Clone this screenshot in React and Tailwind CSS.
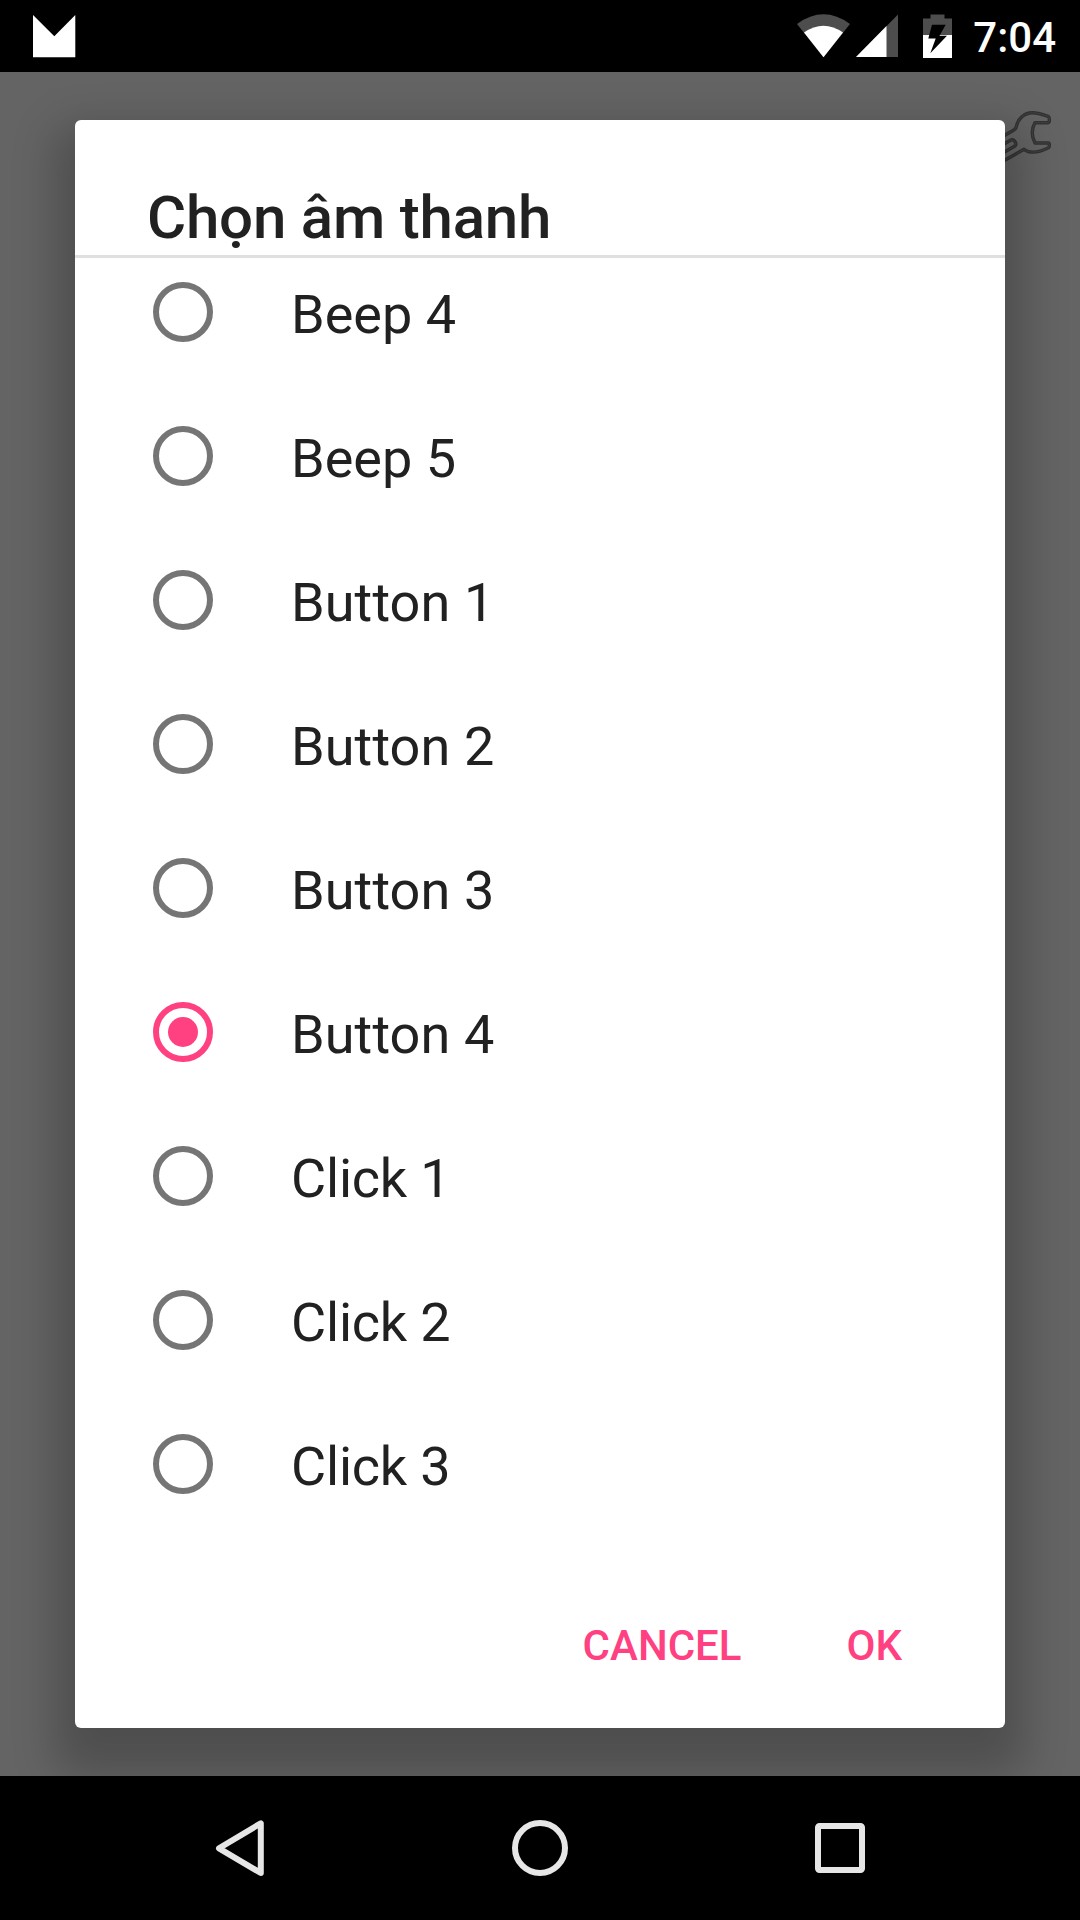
import React from "react";

const SOUNDS = [
  { name: "Beep 4", tracking: "tracking-normal" },
  { name: "Beep 5", tracking: "tracking-normal" },
  { name: "Button 1", tracking: "tracking-[0.1px]" },
  { name: "Button 2", tracking: "tracking-[0.1px]" },
  { name: "Button 3", tracking: "tracking-[0.1px]" },
  { name: "Button 4", tracking: "tracking-[0.1px]" },
  { name: "Click 1", tracking: "tracking-[-0.2px]" },
  { name: "Click 2", tracking: "tracking-[-0.2px]" },
  { name: "Click 3", tracking: "tracking-[-0.2px]" },
];
const SELECTED = "Button 4";

function StatusBar() {
  return (
    <header className="relative z-10 flex h-[72px] items-center justify-between bg-black pl-[33px] pr-[24px]">
      <svg width="43" height="43" viewBox="0 0 43 43" className="mt-[1px]">
        <path d="M0 0L21.3 21.3L42.3 0V42.3H0Z" fill="#fff" />
      </svg>
      <div className="flex items-center">
        <svg width="155" height="44" viewBox="797 14 155 44">
          <path d="M797 24Q823.5 4.700 850 24L823.500 57.300Z" fill="#4d4d4d" />
          <path d="M804 32.600Q823.500 19 843 32.600L823.500 57.300Z" fill="#fff" />
          <path d="M898 14.500V57H856Z" fill="#4d4d4d" />
          <path d="M886.500 26V57H856Z" fill="#fff" />
          <path d="M923 18.500H930.500V14.500H944.500V18.500H952V35H923Z" fill="#4d4d4d" />
          <path d="M923 35H952V58H923Z" fill="#fff" />
          <path d="M932 24.700H945.700L939.500 35.700H947L930.300 53.200L935.700 38.600H928.300Z" fill="#000" />
        </svg>
        <span className="ml-[21px] mt-[4px] text-[42px] font-medium leading-[50px] text-white">7:04</span>
      </div>
    </header>
  );
}

function WrenchIcon() {
  const d =
    "M1000 138L1013.500 130.200Q1016 129 1016.500 126C1018 119 1024 112.800 1032.500 112.800C1038 112.800 1044 115 1048 116.300Q1049.500 117 1049.300 119V121.500Q1049 122.700 1048 122.700H1035Q1029.500 132.500 1035 143H1048Q1049.300 143 1049.300 144.500V146.500Q1049.300 147.500 1048 148C1041 151.500 1034 153 1028 151.500Q1025.500 150.500 1024 149.300L1000 163M1000 146.300L1010.500 140.200Q1013.500 138.800 1015.500 142.500Q1016.500 145 1014.500 146.300L1000 154.600";
  return (
    <svg width="54" height="60" viewBox="1000 108 54 60" fill="none" strokeLinejoin="round">
      <path d={d} stroke="#323232" strokeWidth="3.400" />
      <path d={d} stroke="#424242" strokeWidth="1" />
    </svg>
  );
}

function Radio({ checked }) {
  return checked ? (
    <span className="flex size-[60px] items-center justify-center rounded-full border-[6px] border-[#ff4081]">
      <span className="size-[30px] rounded-full bg-[#ff4081]" />
    </span>
  ) : (
    <span className="size-[60px] rounded-full border-[6px] border-[#757575]" />
  );
}

function SoundDialog() {
  return (
    <section className="z-10 col-start-1 row-start-1 mx-[75px] my-[48px] flex flex-col rounded-[6px] bg-white shadow-[0_26px_44px_20px_rgba(0,0,0,0.22)]">
      <h1 className="h-[135px] pl-[72px] pt-[63px] text-[60px] font-medium leading-[70px] tracking-[-0.2px] text-[#212121]">Chọn âm thanh</h1>
      <div className="h-[3px] shrink-0 bg-[#e0e0e0]" />
      <ul className="-mt-[18px]">
        {SOUNDS.map(({ name, tracking }) => (
          <li key={name} className="flex h-36 items-center pl-[78px]">
            <Radio checked={name === SELECTED} />
            <span className={`ml-[78px] pt-[5px] text-[54px] leading-[64px] text-[#212121] ${tracking}`}>{name}</span>
          </li>
        ))}
      </ul>
      <div className="flex grow items-start justify-end gap-[105px] pr-[103px] pt-[85px] text-[42px] font-medium leading-[50px] text-[#ff4081]">
        <button>CANCEL</button>
        <button>OK</button>
      </div>
    </section>
  );
}

function NavigationBar() {
  return (
    <nav className="relative z-10 flex h-36 items-center justify-between bg-black px-[213px]">
      <svg width="54" height="60" viewBox="213 1818 54 60" fill="none" stroke="#e6e6e6" strokeWidth="6" strokeLinejoin="round">
        <path d="M219 1848.300L260.800 1823.300V1873Z" />
      </svg>
      <svg width="60" height="60" viewBox="0 0 60 60" fill="none" stroke="#e6e6e6" strokeWidth="6">
        <circle cx="30" cy="30" r="25" />
      </svg>
      <svg width="54" height="60" viewBox="0 0 54 60" fill="none" stroke="#e6e6e6" strokeWidth="6">
        <rect x="5" y="8" width="44" height="44" rx="1.500" />
      </svg>
    </nav>
  );
}

export default function App() {
  return (
    <div className="flex h-[1920px] w-[1080px] flex-col overflow-hidden bg-black font-[Roboto,sans-serif]">
      <StatusBar />
      <main className="grid h-[1704px] bg-[#646464]">
        <div className="col-start-1 row-start-1 flex justify-end pr-[26px] pt-[36px]">
          <WrenchIcon />
        </div>
        <SoundDialog />
      </main>
      <NavigationBar />
    </div>
  );
}
